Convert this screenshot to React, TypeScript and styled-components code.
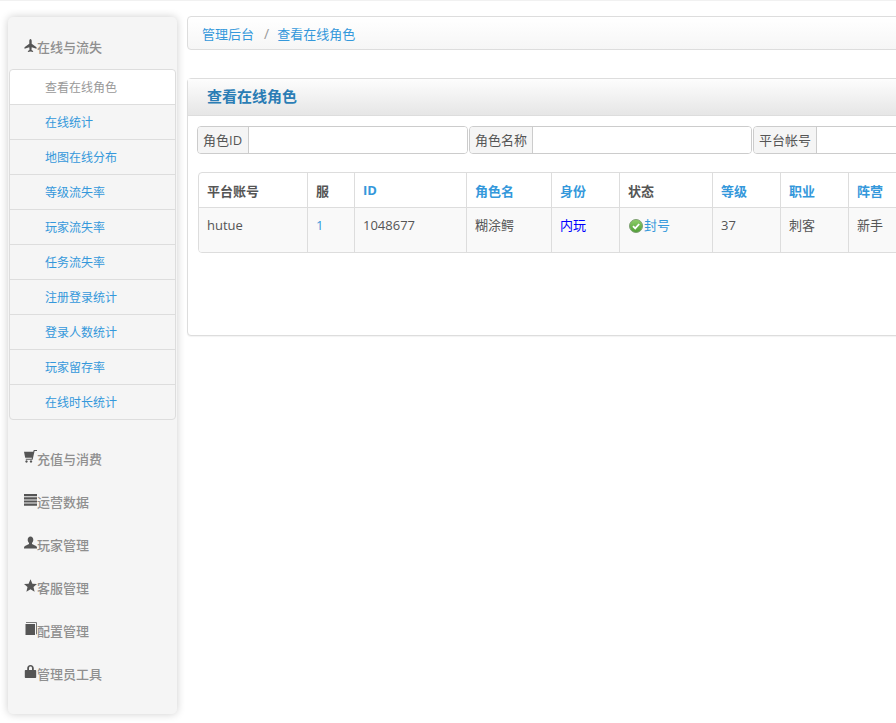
import styled, { createGlobalStyle } from 'styled-components';

const GlobalStyle = createGlobalStyle`
  html, body {
    margin: 0;
    padding: 0;
    height: 723px;
    overflow: hidden;
    background: #fff;
  }
  * {
    box-sizing: border-box;
  }
  body {
    font-family: "Open Sans", "Noto Sans CJK SC", sans-serif;
    font-size: 13px;
    color: #555;
  }
`;

const TopLine = styled.div`
  height: 1px;
  background: #f1f1f1;
`;

const Page = styled.div`
  display: flex;
  align-items: flex-start;
  gap: 10px;
  width: 1000px;
  padding: 15px 0 0 8px;
`;

const Sidebar = styled.aside`
  flex: 0 0 169px;
  height: 697px;
  margin-top: 1px;
  padding: 0 1px;
  background: #f5f5f5;
  border-radius: 5px;
  box-shadow: 0 0 8px rgba(0, 0, 0, 0.2);
`;

const SideHeader = styled.div`
  display: flex;
  align-items: center;
  height: 43px;
  padding: 0 0 1px 15px;
  color: #8f8f8f;
  font-weight: 500;
  svg {
    flex: none;
    width: 13px;
    height: 13px;
    margin-top: -3px;
    fill: #555;
  }
`;

const FirstHeader = styled(SideHeader)`
  height: 52px;
  padding: 7px 0 0 15px;
`;

const SubNav = styled.div`
  margin-bottom: 17px;
  border: 1px solid #ddd;
  border-radius: 4px;
`;

const SubItem = styled.a<{ $active?: boolean }>`
  display: block;
  height: 35px;
  padding-left: 35px;
  font-size: 12px;
  line-height: 36px;
  color: ${(p) => (p.$active ? '#999' : '#3498db')};
  background: ${(p) => (p.$active ? '#fff' : 'transparent')};
  border-bottom: 1px solid #ddd;
  &:first-child {
    border-radius: 4px 4px 0 0;
  }
  &:last-child {
    height: 34px;
    border-bottom: 0;
  }
`;

const Main = styled.main`
  flex: 1;
  min-width: 0;
`;

const Breadcrumb = styled.div`
  display: flex;
  align-items: center;
  height: 34px;
  padding-left: 14px;
  border: 1px solid #ddd;
  border-radius: 4px;
  background: linear-gradient(to bottom, #fff, #f6f6f6);
  a {
    color: #3498db;
  }
  span {
    margin: 0 8px 0 10px;
    font-size: 14px;
    color: #999;
  }
`;

const Panel = styled.section`
  height: 258px;
  margin-top: 28px;
  border: 1px solid #ddd;
  border-radius: 4px;
  background: #fff;
  box-shadow: 0 1px 1px rgba(0, 0, 0, 0.05);
`;

const PanelHeading = styled.h3`
  height: 37px;
  margin: 0;
  padding-left: 19px;
  font-size: 15px;
  font-weight: 700;
  line-height: 34px;
  color: #2b7db5;
  background: linear-gradient(to bottom, #fdfdfd, #e6e6e6);
  border-bottom: 1px solid #ddd;
`;

const PanelBody = styled.div`
  padding: 10px 9px;
`;

const SearchRow = styled.div`
  display: flex;
  gap: 1px;
`;

const InputGroup = styled.div<{ $width: number }>`
  display: flex;
  flex: 0 0 ${(p) => p.$width}px;
  height: 28px;
  border: 1px solid #ccc;
  border-radius: 4px;
  overflow: hidden;
`;

const Addon = styled.span<{ $width: number }>`
  flex: 0 0 ${(p) => p.$width}px;
  padding-left: 5px;
  line-height: 26px;
  white-space: nowrap;
  background: #f5f5f5;
  border-right: 1px solid #ccc;
`;

const SearchInput = styled.input`
  flex: 1;
  min-width: 0;
  border: 0;
  outline: 0;
  background: #fff;
`;

const TableWrap = styled.div`
  width: 760px;
  margin: 18px 0 0 1px;
  border: 1px solid #ddd;
  border-radius: 4px;
  overflow: hidden;
`;

const Table = styled.table`
  width: 100%;
  table-layout: fixed;
  border-collapse: separate;
  border-spacing: 0;
`;

const Th = styled.th<{ $sortable?: boolean }>`
  height: 35px;
  padding: 0 8px;
  font-weight: 700;
  text-align: left;
  color: ${(p) => (p.$sortable ? '#3498db' : '#555')};
  border-right: 1px solid #ddd;
  border-bottom: 1px solid #ddd;
`;

const Td = styled.td`
  height: 44px;
  padding: 7px 8px 0;
  vertical-align: top;
  line-height: 20px;
  background: #f9f9f9;
  border-right: 1px solid #ddd;
`;

const LinkText = styled.span`
  color: #3498db;
`;

const BlueText = styled.span`
  color: #00f;
`;

const StatusCell = styled.span`
  display: inline-flex;
  align-items: center;
  gap: 1px;
  margin-left: 1px;
  color: #3498db;
  svg {
    width: 14px;
    height: 14px;
    margin-top: 2px;
  }
`;

const icons: Record<string, string> = {
  plane: 'M6.500 0c.8 0 1.200 1 1.200 2.200v2.600l4.800 3.400v1.500L7.700 8.200l-.2 2.700 1.600 1.200V13l-2.600-.6-2.600.6v-.9l1.600-1.200-.2-2.700L.500 9.700V8.200l4.800-3.400V2.200C5.300 1 5.700 0 6.500 0z',
  cart: 'M0 1.800h9.200L9.800 0H13v1h-2.400L8.600 9.700H1.800v-1h5.900l.2-1H1.200z M2.500 10.300a1.200 1.200 0 1 0 .01 0z M7 10.300a1.200 1.200 0 1 0 .01 0z',
  list: 'M0 1h13v2.200H0z M0 4.200h13v2.200H0z M0 7.400h13v2.200H0z M0 10.600h13v2.200H0z',
  user: 'M6.500.5c1.700 0 2.800 1.300 2.800 3.200 0 1.300-.5 2.500-1.300 3.200v1l4 2c.7.400 1 1 1 1.800v.8H0v-.8c0-.8.300-1.400 1-1.800l4-2v-1C4.200 6.200 3.700 5 3.700 3.700 3.700 1.800 4.800.5 6.500.5z',
  star: 'M6.500.3l1.900 4.400 4.600.4-3.500 3 1.100 4.600-4.100-2.400-4.100 2.400 1.100-4.600-3.500-3 4.600-.4z',
  book: 'M1.500 2h9.500v11H1.500z M2 .3h10.800v12H12V1.100H2z',
  lock: 'M6.500 0C8.500 0 9.800 1.300 9.800 3.200V5H11.500c.4 0 .7.300.7.700v6.600c0 .4-.3.700-.7.700h-10c-.4 0-.7-.3-.7-.7V5.700c0-.4.3-.7.700-.7h1.700V3.200C3.200 1.300 4.500 0 6.500 0zm0 1.600c-1 0-1.500.6-1.500 1.600V5h3V3.200c0-1-.5-1.600-1.500-1.600z',
};

const Icon = ({ name }: { name: string }) => (
  <svg viewBox="0 0 13 13">
    <path d={icons[name]} fillRule="evenodd" />
  </svg>
);

const subItems = ['查看在线角色', '在线统计', '地图在线分布', '等级流失率', '玩家流失率', '任务流失率', '注册登录统计', '登录人数统计', '玩家留存率', '在线时长统计'];

const sections = [
  { icon: 'cart', label: '充值与消费' },
  { icon: 'list', label: '运营数据' },
  { icon: 'user', label: '玩家管理' },
  { icon: 'star', label: '客服管理' },
  { icon: 'book', label: '配置管理' },
  { icon: 'lock', label: '管理员工具' },
];

const columns = [
  { title: '平台账号', width: 109 },
  { title: '服', width: 47 },
  { title: 'ID', width: 112, sortable: true },
  { title: '角色名', width: 85, sortable: true },
  { title: '身份', width: 68, sortable: true },
  { title: '状态', width: 93 },
  { title: '等级', width: 68, sortable: true },
  { title: '职业', width: 68, sortable: true },
  { title: '阵营', width: 108, sortable: true },
];

const App = () => {
  return (
    <>
      <GlobalStyle />
      <TopLine />
      <Page>
        <Sidebar>
          <FirstHeader>
            <Icon name="plane" />
            在线与流失
          </FirstHeader>
          <SubNav>
            {subItems.map((item, i) => (
              <SubItem key={item} $active={i === 0}>
                {item}
              </SubItem>
            ))}
          </SubNav>
          {sections.map((s) => (
            <SideHeader key={s.label}>
              <Icon name={s.icon} />
              {s.label}
            </SideHeader>
          ))}
        </Sidebar>
        <Main>
          <Breadcrumb>
            <a>管理后台</a>
            <span>/</span>
            <a>查看在线角色</a>
          </Breadcrumb>
          <Panel>
            <PanelHeading>查看在线角色</PanelHeading>
            <PanelBody>
              <SearchRow>
                <InputGroup $width={271}>
                  <Addon $width={51}>角色ID</Addon>
                  <SearchInput />
                </InputGroup>
                <InputGroup $width={283}>
                  <Addon $width={63}>角色名称</Addon>
                  <SearchInput />
                </InputGroup>
                <InputGroup $width={283}>
                  <Addon $width={63}>平台帐号</Addon>
                  <SearchInput />
                </InputGroup>
              </SearchRow>
              <TableWrap>
                <Table>
                  <colgroup>
                    {columns.map((c) => (
                      <col key={c.title} width={c.width} />
                    ))}
                  </colgroup>
                  <thead>
                    <tr>
                      {columns.map((c) => (
                        <Th key={c.title} $sortable={c.sortable}>
                          {c.title}
                        </Th>
                      ))}
                    </tr>
                  </thead>
                  <tbody>
                    <tr>
                      <Td>hutue</Td>
                      <Td>
                        <LinkText>1</LinkText>
                      </Td>
                      <Td>1048677</Td>
                      <Td>糊涂鳄</Td>
                      <Td>
                        <BlueText>内玩</BlueText>
                      </Td>
                      <Td>
                        <StatusCell>
                          <svg viewBox="0 0 14 14">
                            <defs>
                              <linearGradient id="okGreen" x1="0" y1="0" x2="0" y2="1">
                                <stop offset="0" stopColor="#8fcf6a" />
                                <stop offset="1" stopColor="#4f9e35" />
                              </linearGradient>
                            </defs>
                            <circle cx="7" cy="7" r="6.500" fill="url(#okGreen)" stroke="#7f9f74" />
                            <path d="M4 7.200l2.200 2.200L10.200 5" fill="none" stroke="#fff" strokeWidth="1.800" />
                          </svg>
                          封号
                        </StatusCell>
                      </Td>
                      <Td>37</Td>
                      <Td>刺客</Td>
                      <Td>新手</Td>
                    </tr>
                  </tbody>
                </Table>
              </TableWrap>
            </PanelBody>
          </Panel>
        </Main>
      </Page>
    </>
  );
};

export default App;
